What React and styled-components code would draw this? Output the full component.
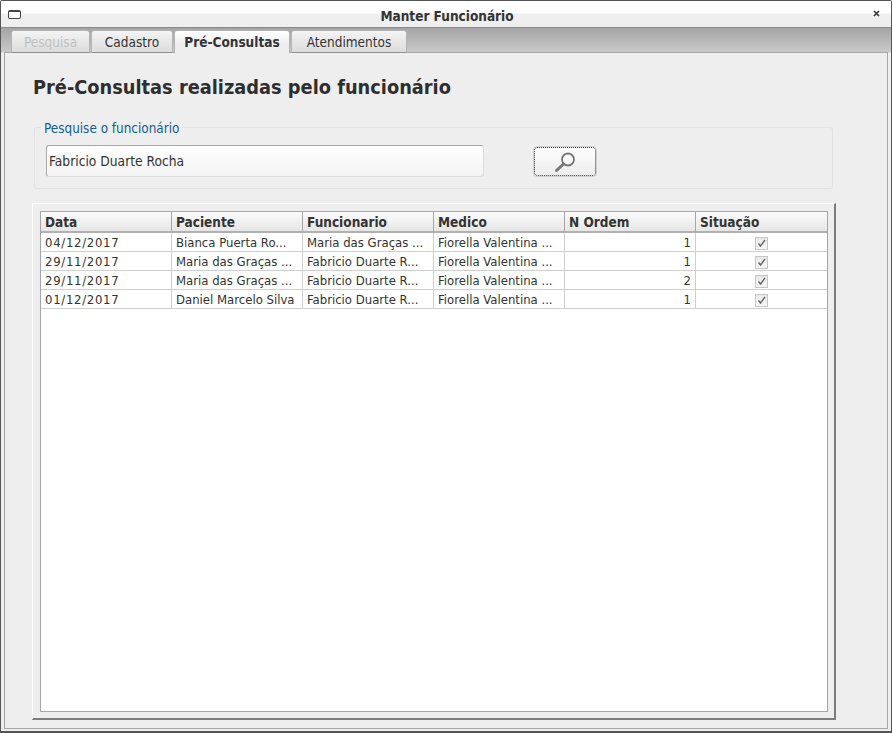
import styled, { createGlobalStyle } from 'styled-components'

const GlobalStyle = createGlobalStyle`
  html, body {
    margin: 0;
    padding: 0;
    background: #fff;
  }
  body {
    font-family: Tahoma, "DejaVu Sans Condensed", "DejaVu Sans", sans-serif;
    font-size: 13px;
    color: #333;
  }
`

const Win = styled.div`
  box-sizing: border-box;
  width: 892px;
  height: 733px;
  display: flex;
  flex-direction: column;
  background: #eee;
  border: 1px solid #555;
  border-width: 1px 1px 2px 1px;
  border-radius: 2px 2px 0 0;
`

const TitleBar = styled.div`
  flex: none;
  height: 27px;
  display: flex;
  align-items: center;
  padding: 4px 6px 0;
  background: linear-gradient(#fff 0, #fff 12px, #efefef 13px, #eee 100%);
  border-bottom: 1px solid #8a8a8a;
  box-sizing: border-box;
`

const WinIcon = styled.span`
  box-sizing: border-box;
  width: 13px;
  height: 9px;
  margin: 0 0 4px 1px;
  border: 1.5px solid #444;
  border-top-width: 2px;
  border-radius: 2px;
  background: #fff;
`

const Title = styled.div`
  flex: 1;
  text-align: center;
  font-weight: bold;
  font-size: 13.5px;
  color: #333;
`

const CloseIcon = styled.svg`
  width: 7px;
  height: 7px;
  margin: 0 5px 5px 0;
`

const Body = styled.div`
  flex: 1;
  display: flex;
  flex-direction: column;
  padding: 0 3px 2px 3px;
  min-height: 0;
  background: linear-gradient(#a5a5a5 0, #c9c9c9 24px, #eee 25px);
`

const TabBar = styled.div`
  flex: none;
  height: 25px;
  display: flex;
  align-items: flex-end;
  gap: 1px;
  padding-left: 7px;
  margin-bottom: -1px;
  position: relative;
  z-index: 1;
`

const Tab = styled.div`
  box-sizing: border-box;
  width: ${p => p.$w}px;
  height: 23px;
  display: flex;
  align-items: center;
  justify-content: center;
  font-size: 13.5px;
  border: 1px solid #b4b4b4;
  border-bottom: ${p => (p.$active ? 'none' : '1px solid #8f8f8f')};
  border-radius: 3px 3px 0 0;
  background: ${p => (p.$active ? 'linear-gradient(#fff, #eee 60%)' : 'linear-gradient(#f4f4f4, #dcdcdc)')};
  color: ${p => (p.$disabled ? '#c0c0c0' : '#333')};
  font-weight: ${p => (p.$active ? 'bold' : 'normal')};
`

const Panel = styled.div`
  box-sizing: border-box;
  flex: 1;
  min-height: 0;
  display: flex;
  flex-direction: column;
  background: #eee;
  border: 1px solid #a6a6a6;
  padding: 22px 50px 8px 27px;
`

const Heading = styled.h1`
  margin: 0 0 0 1px;
  height: 26px;
  line-height: 26px;
  font-size: 19.8px;
  font-weight: bold;
  color: #2e2e2e;
`

const Group = styled.fieldset`
  box-sizing: border-box;
  width: 799px;
  height: 72px;
  margin: 16px 0 0 2px;
  padding: 8px 0 0 11px;
  display: flex;
  align-items: flex-start;
  border: 1px solid #e2e2e2;
  border-radius: 3px;
`

const Legend = styled.legend`
  margin-left: -5px;
  padding: 4px 3px 0;
  font-size: 13.4px;
  line-height: 16px;
  color: #0f5d94;
`

const SearchInput = styled.input`
  box-sizing: border-box;
  width: 438px;
  height: 32px;
  padding: 0 2px;
  font: inherit;
  font-size: 13.7px;
  color: #333;
  border: 1px solid #dcdcdc;
  border-top-color: #a9a9a9;
  border-left-color: #a9a9a9;
  border-radius: 3px;
  background: linear-gradient(#fff, #f3f3f3);
  outline: none;
`

const SearchButton = styled.button`
  box-sizing: border-box;
  width: 62px;
  height: 29px;
  margin: 2px 0 0 50px;
  padding: 0;
  display: flex;
  align-items: center;
  justify-content: center;
  border: 1px dotted #333;
  outline: 1px solid #d0d0d0;
  border-radius: 3px;
  background: linear-gradient(#fff, #ececec);
`

const TableFrame = styled.div`
  box-sizing: border-box;
  width: 804px;
  height: 517px;
  margin: 14px 0 0 0;
  padding: 7px 6px 6px 7px;
  background: #eee;
  border-style: solid;
  border-width: 1px 2px 2px 1px;
  border-color: #fff #7d7d7d #7d7d7d #fff;
`

const TableBox = styled.div`
  box-sizing: border-box;
  height: 100%;
  background: #fff;
  border: 1px solid #a6a6a6;
`

const Grid = styled.table`
  width: 786px;
  table-layout: fixed;
  border-collapse: separate;
  border-spacing: 0;
  color: #333;
`

const Head = styled.th`
  box-sizing: border-box;
  width: 131px;
  height: 21px;
  padding: 1px 4px 0;
  text-align: left;
  font-weight: bold;
  font-size: 13.5px;
  background: linear-gradient(#fbfbfb, #e6e6e6);
  border-right: 1px solid #a6a6a6;
  border-bottom: 2px solid #b0b0b0;
  &:last-child {
    border-right: none;
  }
`

const Cell = styled.td`
  box-sizing: border-box;
  height: 19px;
  padding: 0 4px;
  white-space: nowrap;
  overflow: hidden;
  text-align: ${p => (p.$align ? p.$align : 'left')};
  letter-spacing: ${p => (p.$spaced ? '.7px' : '0')};
  border-right: 1px solid #cfcfcf;
  border-bottom: 1px solid #cfcfcf;
  &:last-child {
    border-right: none;
  }
`

const Check = styled.span`
  box-sizing: border-box;
  display: inline-flex;
  width: 13px;
  height: 13px;
  align-items: center;
  justify-content: center;
  vertical-align: middle;
  border: 1px solid #c6c6c6;
  background: linear-gradient(#e8e8e8, #f6f6f6);
`

const rows = [
  ['04/12/2017', 'Bianca Puerta Ro...', 'Maria das Graças ...', 'Fiorella Valentina ...', 1],
  ['29/11/2017', 'Maria das Graças ...', 'Fabricio Duarte R...', 'Fiorella Valentina ...', 1],
  ['29/11/2017', 'Maria das Graças ...', 'Fabricio Duarte R...', 'Fiorella Valentina ...', 2],
  ['01/12/2017', 'Daniel Marcelo Silva', 'Fabricio Duarte R...', 'Fiorella Valentina ...', 1],
]

const columns = ['Data', 'Paciente', 'Funcionario', 'Medico', 'N Ordem', 'Situação']

export default function App() {
  return (
    <>
      <GlobalStyle />
      <Win>
        <TitleBar>
          <WinIcon />
          <Title>Manter Funcionário</Title>
          <CloseIcon viewBox="0 0 7 7">
            <path d="M1 1l5 5M6 1l-5 5" stroke="#333" strokeWidth="1.6" />
          </CloseIcon>
        </TitleBar>
        <Body>
          <TabBar>
            <Tab $w={79} $disabled>Pesquisa</Tab>
            <Tab $w={82}>Cadastro</Tab>
            <Tab $w={116} $active>Pré-Consultas</Tab>
            <Tab $w={116}>Atendimentos</Tab>
          </TabBar>
          <Panel>
            <Heading>Pré-Consultas realizadas pelo funcionário</Heading>
            <Group>
              <Legend>Pesquise o funcionário</Legend>
              <SearchInput readOnly value="Fabricio Duarte Rocha" />
              <SearchButton>
                <svg width="24" height="24" viewBox="0 0 24 24">
                  <circle cx="15" cy="9.5" r="6" fill="none" stroke="#777" strokeWidth="1.8" />
                  <path d="M10.5 14l-7 6.5" stroke="#777" strokeWidth="3" strokeLinecap="round" />
                </svg>
              </SearchButton>
            </Group>
            <TableFrame>
              <TableBox>
                <Grid>
                  <thead>
                    <tr>
                      {columns.map(c => <Head key={c}>{c}</Head>)}
                    </tr>
                  </thead>
                  <tbody>
                    {rows.map((r, i) => (
                      <tr key={i}>
                        <Cell $spaced>{r[0]}</Cell>
                        <Cell>{r[1]}</Cell>
                        <Cell>{r[2]}</Cell>
                        <Cell>{r[3]}</Cell>
                        <Cell $align="right">{r[4]}</Cell>
                        <Cell $align="center">
                          <Check>
                            <svg width="9" height="9" viewBox="0 0 9 9">
                              <path d="M1.5 4.5l2 2.5L8 1" fill="none" stroke="#666" strokeWidth="1.4" />
                            </svg>
                          </Check>
                        </Cell>
                      </tr>
                    ))}
                  </tbody>
                </Grid>
              </TableBox>
            </TableFrame>
          </Panel>
        </Body>
      </Win>
    </>
  )
}
